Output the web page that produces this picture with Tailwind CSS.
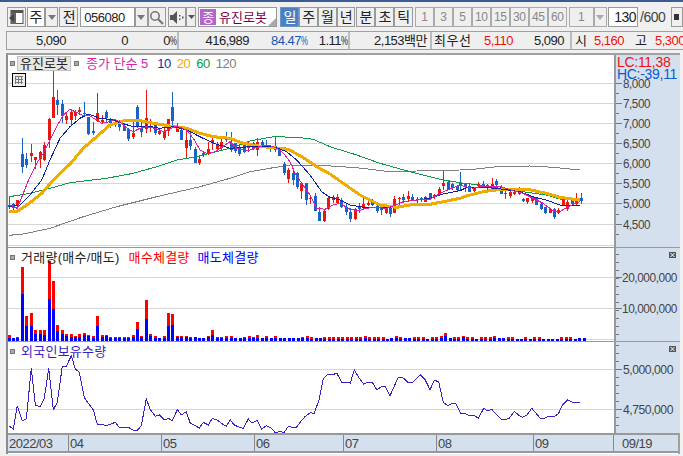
<!DOCTYPE html>
<html lang="ko">
  <head>
    <meta charset="UTF-8" />
    <title>Chart</title>
    <script src="https://cdn.jsdelivr.net/npm/@tailwindcss/browser@4"></script>
  </head>
  <body class="bg-[#f0f0f0] overflow-hidden font-['Liberation_Sans','Noto_Sans_CJK_KR',sans-serif] text-[13px] leading-none text-[#222] tracking-[-0.5px]">
    <div class="w-[683px] h-[456px] overflow-hidden flex flex-col">
      <div class="h-[2px] bg-[#3c5a94]"></div>

      <!-- toolbar -->
      <div class="flex h-[20px] mt-[5px] ml-[7px] text-[14px]">
        <div class="w-[19px] border border-[#999] bg-[#efefef] flex items-center justify-center">
          <svg width="15" height="14" viewBox="0 0 15 14"><rect x="2" y="0.5" width="12" height="13" fill="#fff" stroke="#555"/><rect x="2" y="0" width="12" height="3" fill="#555"/><rect x="2" y="3" width="5" height="11" fill="#666"/><path d="M0 8l5-4v8z" fill="#444"/></svg>
        </div>
        <div class="w-[18px] ml-[1px] border border-[#999] bg-white flex items-center justify-center">주</div>
        <div class="w-[14px] border border-[#999] bg-[#efefef] flex items-center justify-center"><svg width="8" height="5"><path d="M0 0h8l-4 5z" fill="#777"/></svg></div>
        <div class="w-[19px] ml-[1px] border border-[#999] bg-[#efefef] flex items-center justify-center">전</div>
        <div class="w-[55px] ml-[2px] border border-[#999] bg-white flex items-center pl-[3px] text-[13px]">056080</div>
        <div class="w-[13px] border border-[#999] bg-[#efefef] flex items-center justify-center"><svg width="8" height="5"><path d="M0 0h8l-4 5z" fill="#777"/></svg></div>
        <div class="w-[19px] border border-[#999] bg-[#efefef] flex items-center justify-center">
          <svg width="15" height="15" viewBox="0 0 15 15" fill="none" stroke="#777"><circle cx="6" cy="6" r="4.2" stroke-width="1.6"/><path d="M9 9l5 5" stroke-width="2.2"/></svg>
        </div>
        <div class="w-[18px] ml-[2px] border border-[#999] bg-[#efefef] flex items-center justify-center">
          <svg width="14" height="13" viewBox="0 0 14 13" fill="#555"><path d="M0 4h3l4-4v13l-4-4H0z"/><rect x="9" y="4" width="1.5" height="1.5"/><rect x="9" y="7.5" width="1.5" height="1.5"/><rect x="12" y="5.5" width="1.5" height="2"/></svg>
        </div>
        <div class="w-[10px] border border-[#999] bg-[#efefef] flex items-center justify-center"><svg width="7" height="4"><path d="M0 0h7l-3.5 4z" fill="#555"/></svg></div>
        <div class="relative w-[80px] ml-[2px] border border-[#999] bg-white flex items-center pl-[1px]">
          <span class="w-[16px] h-[16px] bg-[#b565c9] text-white flex items-center justify-center text-[13px]">종</span>
          <span class="ml-[3px] text-[#7a0040] text-[13px] tracking-[0px]">유진로봇</span>
          <svg class="absolute right-0 bottom-0" width="8" height="8"><path d="M8 0v8H0z" fill="#aaa"/></svg>
        </div>
        <div class="w-[19px] ml-[3px] border border-[#6d93c7] bg-[#4a7fc0] text-white flex items-center justify-center">일</div>
        <div class="w-[19px] border border-[#999] bg-[#efefef] flex items-center justify-center">주</div>
        <div class="w-[19px] border border-[#999] bg-[#efefef] flex items-center justify-center">월</div>
        <div class="w-[19px] border border-[#999] bg-[#efefef] flex items-center justify-center">년</div>
        <div class="w-[19px] ml-[1px] border border-[#999] bg-[#efefef] flex items-center justify-center">분</div>
        <div class="w-[19px] border border-[#999] bg-[#efefef] flex items-center justify-center">초</div>
        <div class="w-[19px] border border-[#999] bg-[#efefef] flex items-center justify-center">틱</div>
        <div class="flex ml-[2px] text-[12px] text-[#888]">
          <div class="w-[19px] border border-[#aaa] bg-[#efefef] flex items-center justify-center">1</div>
          <div class="w-[19px] border border-[#aaa] bg-[#efefef] flex items-center justify-center">3</div>
          <div class="w-[19px] border border-[#aaa] bg-[#efefef] flex items-center justify-center">5</div>
          <div class="w-[19px] border border-[#aaa] bg-[#efefef] flex items-center justify-center">10</div>
          <div class="w-[19px] border border-[#aaa] bg-[#efefef] flex items-center justify-center">15</div>
          <div class="w-[19px] border border-[#aaa] bg-[#efefef] flex items-center justify-center">30</div>
          <div class="w-[19px] border border-[#aaa] bg-[#efefef] flex items-center justify-center">45</div>
          <div class="w-[19px] border border-[#aaa] bg-[#efefef] flex items-center justify-center">60</div>
        </div>
        <div class="w-[25px] ml-[2px] border border-[#aaa] bg-[#efefef] text-[#888] text-[12px] flex items-center justify-center">1</div>
        <div class="w-[14px] border border-[#aaa] bg-[#efefef] flex items-center justify-center"><svg width="8" height="5"><path d="M0 0h8l-4 5z" fill="#aaa"/></svg></div>
        <div class="w-[30px] ml-[1px] border border-[#999] bg-white flex items-center justify-end pr-[1px]">130</div>
        <div class="w-[24px] ml-[2px] flex items-center text-[#444]">/600</div>
        <div class="ml-[7px] w-[12px] border border-[#999] bg-[#efefef] flex items-center pl-[2px]"><svg width="5" height="6"><path d="M0 0h5v6H0z" fill="#333"/></svg></div>
      </div>

      <!-- quote strip -->
      <div class="flex h-[19px] mt-[4px] ml-[6px] w-[690px] border border-[#a0a0a0] bg-[#efefef] text-[13px] items-center">
        <div class="flex w-[172px] h-full items-center border-r-2 border-[#bbb] shrink-0">
          <span class="w-[59px] text-right">5,090</span>
          <span class="w-[62px] text-right">0</span>
          <span class="w-[48px] text-right">0<span class="inline-block w-[6px] scale-x-[.6] origin-left text-left">%</span></span>
        </div>
        <div class="flex w-[171px] h-full items-center border-r-2 border-[#bbb] shrink-0">
          <span class="w-[70px] text-right">416,989</span>
          <span class="w-[58px] text-right text-[#1a56b8]">84.47<span class="inline-block w-[6px] scale-x-[.6] origin-left text-left">%</span></span>
          <span class="w-[40px] text-right">1.11<span class="inline-block w-[6px] scale-x-[.6] origin-left text-left">%</span></span>
        </div>
        <div class="w-[82px] h-full flex items-center justify-end pr-[3px] border-r-2 border-[#bbb] shrink-0">2,153백만</div>
        <div class="flex w-[140px] h-full items-center border-r-2 border-[#bbb] shrink-0 pl-[2px]">
          <span class="w-[46px] tracking-[0.5px]">최우선</span>
          <span class="w-[33px] text-right text-[#ee1111]">5,110</span>
          <span class="w-[51px] text-right">5,090</span>
        </div>
        <div class="flex h-full items-center shrink-0 pl-[3px]">
          <span class="w-[17px]">시</span>
          <span class="w-[32px] text-right text-[#ee1111]">5,160</span>
          <span class="w-[11px]"></span>
          <span class="w-[20px]">고</span>
          <span class="w-[30px] text-right text-[#ee1111]">5,300</span>
        </div>
      </div>

      <!-- chart frame -->
      <div class="mt-[3px] ml-[6px] w-[674px] border-2 border-[#a0a0a0] border-l-[#8c8c8c] border-b-0 flex flex-col h-[401px] bg-white">
        <!-- price pane -->
        <div class="flex h-[193px] border-b border-[#999]">
          <div class="relative w-[606px]">
            <svg id="price" class="block" width="606" height="193" viewBox="8 55 606 193" shape-rendering="crispEdges"></svg>
            <div class="absolute left-[2px] top-0 flex items-center h-[16px] text-[13px] whitespace-nowrap">
              <span class="w-[5px] h-[5px] bg-[#a8a8a8] border border-[#777]"></span>
              <span class="ml-[2px] w-[54px] h-[15px] bg-[#e6e6e6] border border-[#c4c4c4] flex items-center justify-center text-[#222] tracking-[0px]">유진로봇</span>
              <span class="ml-[3px] w-[5px] h-[5px] bg-[#a8a8a8] border border-[#777]"></span>
              <span class="ml-[7px] text-[#d81fa8] tracking-[0px]">종가 단순 5</span>
              <span class="ml-[9px] text-[#0a2bb8]">10</span>
              <span class="ml-[6px] text-[#f0a500]">20</span>
              <span class="ml-[6px] text-[#0a9b45]">60</span>
              <span class="ml-[6px] text-[#808080]">120</span>
            </div>
            <svg class="absolute left-[4px] top-[18px]" width="14" height="14" viewBox="0 0 14 14" shape-rendering="crispEdges"><rect x="0.5" y="0.5" width="13" height="13" fill="#eee" stroke="#000"/><path d="M3 3.5h8M3 6.5h8M3 9.5h8M3.5 3v8M6.5 3v8M9.5 3v8" stroke="#777" fill="none"/></svg>
          </div>
          <div class="relative w-[66px] bg-[#d5e0ee] border-l-2 border-[#999]">
            <svg id="priceAxis" class="block" width="64" height="193" viewBox="616 55 64 193"></svg>
            <div class="absolute left-0 top-0 w-[64px] h-[24px] pl-[1px] pt-[1px] bg-[#d5e0ee] text-[14px] tracking-[-0.3px] leading-[12px] whitespace-nowrap">
              <div class="text-[#ee1111]">LC:11,38</div>
              <div class="text-[#0a5bd0]">HC:-39,11</div>
            </div>
          </div>
        </div>
        <!-- volume pane -->
        <div class="flex h-[94px] border-b border-[#999]">
          <div class="relative w-[606px]">
            <svg id="volume" class="block" width="606" height="93" viewBox="8 249 606 93" shape-rendering="crispEdges"></svg>
            <div class="absolute left-[2px] top-[1px] flex items-center h-[16px] text-[13px] tracking-[0.25px] whitespace-nowrap">
              <span class="w-[5px] h-[5px] bg-[#a8a8a8] border border-[#777]"></span>
              <span class="ml-[6px] text-[#222]">거래량(매수/매도)</span>
              <span class="ml-[9px] text-[#f00]">매수체결량</span>
              <span class="ml-[8px] text-[#00f]">매도체결량</span>
            </div>
          </div>
          <div class="w-[66px] bg-[#d5e0ee] border-l-2 border-[#999]">
            <svg id="volumeAxis" class="block" width="64" height="93" viewBox="616 249 64 93"></svg>
          </div>
        </div>
        <!-- foreign holdings pane -->
        <div class="flex h-[93px] border-b-2 border-[#999]">
          <div class="relative w-[606px]">
            <svg id="foreign" class="block" width="606" height="91" viewBox="8 343 606 91" shape-rendering="crispEdges"></svg>
            <div class="absolute left-[2px] top-[1px] flex items-center h-[16px] text-[13px] tracking-[0.25px] whitespace-nowrap">
              <span class="w-[5px] h-[5px] bg-[#a8a8a8] border border-[#777]"></span>
              <span class="ml-[6px] text-[#3b1fc0]">외국인보유수량</span>
            </div>
          </div>
          <div class="w-[66px] bg-[#d5e0ee] border-l-2 border-[#999]">
            <svg id="foreignAxis" class="block" width="64" height="91" viewBox="616 343 64 91"></svg>
          </div>
        </div>
        <!-- date axis -->
        <div class="flex h-[18px] bg-[#d5e0ee] border-b-2 border-[#999] text-[13px] text-[#444] items-center">
          <div class="w-[61px] h-full border-r border-[#888] flex items-center pl-[1px]">2022/03</div>
          <div class="w-[93px] h-full border-r border-[#888] flex items-center pl-[1px]">04</div>
          <div class="w-[93px] h-full border-r border-[#888] flex items-center pl-[1px]">05</div>
          <div class="w-[89px] h-full border-r border-[#888] flex items-center pl-[1px]">06</div>
          <div class="w-[93px] h-full border-r border-[#888] flex items-center pl-[1px]">07</div>
          <div class="w-[97px] h-full border-r border-[#888] flex items-center pl-[1px]">08</div>
          <div class="w-[80px] h-full border-r border-[#888] flex items-center pl-[1px]">09</div>
          <div class="flex-1 h-full flex items-center pl-[8px]">09/19</div>
        </div>
      </div>
    </div>

    <script>
      // candles traced from the chart: [x, wickTop, bodyTop, bodyBottom, wickBottom, up?]
      const RED = "#e8170f", BLUE = "#1763c8";
      const seg1 = [[28,322,345,350,358,0],[40,338,343,355,358,0],[52,330,330,345,360,1],[67,145,192,230,250,0],[79,190,207,225,235,0],[94,162,190,200,215,1],[106,200,202,210,235,1],[121,182,185,205,232,1],[133,155,165,210,212,1],[146,85,87,150,175,1],[160,-60,21,83,85,1],[172,0,30,45,75,0],[187,30,42,78,100,0],[199,65,78,90,100,1],[214,62,67,90,105,1],[226,60,67,78,90,1],[238,50,60,65,75,1],[253,35,70,74,75,0],[265,80,80,132,135,0],[280,95,123,130,135,0],[292,10,70,95,97,1],[306,75,90,95,100,1],[319,60,67,85,95,0],[331,85,90,100,115,0],[346,90,95,105,110,1],[358,90,102,110,122,0],[373,100,108,122,125,0],[385,115,118,147,155,0],[400,97,130,143,147,1],[412,45,50,108,115,0],[424,90,115,128,140,0],[439,0,85,118,130,1],[451,88,108,115,128,1],[466,100,105,128,135,0],[478,115,122,130,135,1],[493,110,122,142,150,1],[505,88,88,125,138,1],[517,5,52,95,110,0],[532,100,110,125,128,1],[544,118,120,150,150,0],[559,120,150,173,208,1],[571,125,150,168,178,0],[586,172,178,220,220,0],[598,195,207,218,225,1],[610,185,190,195,200,0],[625,155,178,192,195,1],[637,140,150,160,180,1],[652,155,162,177,185,1],[664,140,155,172,178,1],[679,125,142,150,155,0]];
      const seg2 = [[2,35,70,90,95,0],[14,70,70,95,100,0],[28,75,82,103,108,0],[41,70,72,95,100,0],[55,65,72,85,95,1],[68,65,68,85,90,0],[82,55,65,88,108,1],[95,60,65,78,85,0],[108,60,75,80,85,0],[120,75,78,88,95,0],[134,50,78,90,95,0],[148,85,90,108,108,0],[161,125,132,158,165,0],[175,145,150,178,190,1],[188,145,160,182,195,0],[200,155,160,202,205,0],[214,185,190,213,235,1],[227,190,190,242,255,0],[241,225,235,238,252,1],[254,220,228,273,275,0],[268,262,276,303,305,0],[281,270,273,303,305,1],[294,230,235,268,270,1],[308,225,232,240,250,1],[320,222,230,247,248,1],[334,235,240,262,265,0],[347,250,260,275,285,0],[361,265,276,297,308,0],[374,265,268,298,300,1],[386,250,258,268,280,0],[400,235,252,262,270,1],[413,238,250,255,258,1],[427,238,242,255,260,0],[440,255,258,272,280,0],[454,260,265,272,285,0],[467,260,267,280,282,1],[479,258,262,283,292,0],[493,228,237,278,278,1],[506,232,235,238,262,1],[520,222,230,240,248,0],[533,212,228,238,245,1],[547,222,230,242,243,0],[560,232,236,240,250,1],[573,230,235,238,245,0],[586,228,230,245,245,1],[600,218,220,235,240,0],[613,222,225,232,238,1],[626,200,208,222,225,1],[640,152,190,200,208,1],[653,182,186,207,210,0],[667,190,192,205,212,0],[680,195,198,210,215,0]];
      const seg3 = [[22,65,97,108,120,0],[37,98,102,108,125,0],[49,100,108,125,128,0],[64,110,112,125,125,1],[76,97,103,110,115,1],[91,94,103,108,115,0],[103,103,105,110,130,1],[116,85,103,118,125,1],[130,88,92,104,118,0],[143,105,112,132,132,0],[157,118,130,133,147,0],[170,120,125,138,143,1],[184,118,125,130,135,1],[197,112,122,132,135,0],[209,145,148,155,158,0],[223,143,145,157,160,1],[236,138,140,152,158,1],[250,140,142,165,165,0],[263,155,162,177,178,0],[277,170,172,190,192,0],[290,175,177,188,190,1],[302,175,178,203,207,0],[316,175,180,190,193,1],[329,148,150,165,170,1],[343,150,155,175,182,1],[356,143,145,162,165,0],[370,128,152,160,163,1],[383,128,145,155,162,0]];

      const pick = (seg, ox, oy) => seg.map(c => ({
        x: Math.round(ox + c[0] / 3), wt: oy + c[1] / 3, bt: oy + c[2] / 3, bb: oy + c[3] / 3, wb: oy + c[4] / 3, up: c[5]
      }));
      const candles = [...pick(seg1, 0, 90), ...pick(seg2, 230, 120), ...pick(seg3, 453, 150)];

      const toPts = (pts, ox, oy) => {
        const out = [];
        for (let i = 0; i < pts.length; i += 2) out.push((ox + pts[i] / 3).toFixed(1) + "," + (oy + pts[i + 1] / 3).toFixed(1));
        return out.join(" ");
      };
      const line = (parts, color, w) => `<polyline points="${parts.join(" ")}" fill="none" stroke="${color}" stroke-width="${w}" shape-rendering="crispEdges"/>`;

      const ma120 = [toPts([28,436,70,432,150,415,250,380,350,350,470,320,600,290,690,265],0,90), toPts([60,155,130,143,180,135,290,137,380,143,480,155,560,153,690,150],230,120), toPts([70,57,130,50,230,48,300,52,380,60],453,150)];
      const ma60 = [toPts([28,320,90,310,150,295,210,278,260,272,320,265,400,250,470,230,530,210,590,200,690,175],0,90), toPts([60,63,130,50,200,52,250,58,300,80,380,105,450,130,540,155,640,180,690,188],230,120), toPts([60,103,140,115,210,125,280,135,320,147,380,150],453,150)];
      const ma20 = [toPts([28,366,50,365,90,338,125,310,165,265,210,222,250,175,290,140,330,105,370,93,410,90,460,100,510,108,560,115,600,130,640,140,690,145],0,90), toPts([40,70,100,80,175,88,215,110,260,140,300,162,340,190,390,225,450,255,500,262,540,255,600,253,640,245,690,235],230,120), toPts([40,138,90,125,150,117,220,117,280,130,320,142,380,150],453,150)];
      const ma10 = [toPts([28,350,60,345,90,315,125,270,150,210,180,145,210,110,240,85,265,72,300,85,340,90,365,100,400,110,440,108,480,115,520,110,560,120,600,140,640,160,690,175],0,90), toPts([60,80,100,80,130,80,170,95,200,120,240,165,275,215,300,232,330,240,360,255,400,262,480,262,520,245,600,235,640,222,690,212],230,120), toPts([40,113,100,112,150,118,200,125,240,140,280,150,320,165,380,168],453,150)];
      const ma5 = [toPts([28,345,52,355,70,310,90,260,110,220,130,190,150,150,170,110,190,75,210,58,225,65,245,75,265,75,290,90,305,100,330,95,345,88,365,100,385,118,400,125,420,115,440,110,465,115,490,125,515,115,530,108,560,120,580,145,600,180,620,190,640,188,660,175,690,155],0,90), toPts([20,85,55,92,80,82,110,75,130,80,150,90,165,105,180,125,195,160,215,190,240,225,260,265,285,268,310,255,330,250,360,268,385,272,410,265,430,262,470,265,490,258,520,245,560,240,600,238,640,215,690,195],230,120), toPts([30,108,60,115,90,108,120,108,150,112,180,122,210,130,240,145,270,160,300,182,320,185,345,170,380,155],453,150)];

      let price = "";
      [83,103,123,143,163,183,203,224,245].forEach(y => price += `<rect x="8" y="${y}" width="606" height="1" fill="#d6d6d6"/>`);
      price += line(ma120, "#808080", 1);
      candles.forEach(c => {
        const col = c.up ? RED : BLUE;
        price += `<rect x="${c.x}" y="${c.wt.toFixed(0)}" width="1" height="${Math.max(1, c.wb - c.wt).toFixed(0)}" fill="${col}"/>`;
        price += `<rect x="${c.x - 1}" y="${c.bt.toFixed(0)}" width="3" height="${Math.max(1, c.bb - c.bt).toFixed(0)}" fill="${col}"/>`;
      });
      price += line(ma60, "#0a9b45", 1) + line(ma20, "#f0ab00", 3) + line(ma10, "#0a22a8", 1) + line(ma5, "#dd1fa8", 1);
      document.getElementById("price").innerHTML = price;

      // volume bars: zoomed tops up to June, then heights in px over the baseline
      const BASE = 342;
      const volA = [[28,273,282],[40,282,282],[52,280,282],[67,70,150],[79,217,245],[94,208,245],[106,258,270],[121,258,270],[133,258,272],[146,52,165],[160,112,195],[172,243,262],[187,258,270],[199,270,275],[214,270,280],[226,276,280],[238,270,278],[253,267,273],[265,273,275],[280,276,282],[292,217,245],[306,273,278],[319,273,276],[331,280,282],[346,280,283],[358,280,282],[373,280,283],[385,278,281],[400,273,280],[412,235,255],[424,276,280],[439,168,225],[451,270,276],[466,276,282],[478,283,283],[493,276,282],[505,208,245],[517,210,243],[532,276,280],[544,276,280],[559,276,280],[571,280,283],[586,280,280],[598,283,283],[610,283,283],[625,276,280],[637,258,273],[652,280,282],[664,280,282],[679,276,282]];
      const volB = [[5,3],[0,3],[0,3],[4,3],[5,3],[4,3],[6,3],[0,3],[5,3],[0,3],[5,3],[0,3],[0,3],[0,3],[0,3],[0,3],[4,3],[5,3],[4,2],[0,3],[0,3],[4,2],[4,2],[4,2],[4,2],[4,2],[4,2],[4,2],[4,2],[4,2],[5,3],[4,2],[4,2],[4,2],[4,2],[0,2],[0,3],[5,3],[4,2],[0,3],[0,3],[4,2],[4,2],[4,2],[0,2],[4,2],[4,2],[5,3],[8,5],[0,3],[4,2],[4,2],[5,4],[4,2],[4,2],[0,2],[4,2],[4,2],[4,2],[5,3],[0,3],[0,3],[4,2],[4,2],[0,2],[0,2],[4,2],[0,2],[4,2],[4,2],[0,2],[0,2],[0,2],[0,2],[4,2],[4,2],[4,2],[0,2],[0,3],[0,3]];
      let volume = "";
      [278,309,340].forEach(y => volume += `<rect x="8" y="${y}" width="606" height="1" fill="#d6d6d6"/>`);
      const bar = (x, top, mid) => {
        let s = "";
        if (top < mid) s += `<rect x="${x - 1}" y="${top}" width="3" height="${mid - top}" fill="#f00"/>`;
        return s + `<rect x="${x - 1}" y="${mid}" width="3" height="${BASE - mid}" fill="#00f"/>`;
      };
      volA.forEach(v => volume += bar(Math.round(v[0] / 3), Math.round(245 + v[1] / 3), Math.round(245 + v[2] / 3)));
      volB.forEach((v, i) => volume += bar(Math.round(225 + (17 + i * 13.4) / 3), BASE - (v[0] || v[1]), BASE - v[1]));
      document.getElementById("volume").innerHTML = volume;

      const foreignA = [28,262,40,270,52,200,67,245,79,240,94,88,106,198,121,203,133,178,146,88,160,212,172,190,187,82,199,82,214,50,226,90,238,100,253,175,265,193,280,212,292,256,306,256,319,260,331,256,346,250,358,265,373,267,385,265,400,274,412,274,424,260,439,180,451,212,466,232,478,228,493,243,505,238,517,245,532,212,544,228,559,218,571,253,586,260,598,267,610,250,625,258,637,238,652,243,664,253,679,262,691,243,703,258,718,265,730,268,745,240,757,252,772,244,785,270,799,260,814,268,826,281,840,277,852,281,865,262,877,265,889,265,904,245,916,232,931,221,943,223,958,180,970,120,985,105,997,108,1010,102,1025,130];
      const foreignB = [0,130,28,132,40,92,55,118,68,135,82,130,94,130,107,152,122,143,133,142,147,170,172,115,187,117,200,130,215,130,238,108,253,123,267,152,280,124,293,128,307,190,320,200,335,193,345,195,358,222,372,223,385,231,400,229,412,238,428,208,440,216,452,211,480,241,495,241,505,238,520,217,535,230,545,235,558,228,572,208,598,238,610,238,622,232,640,232,652,225,665,197,680,183,695,190,717,190];
      document.getElementById("foreign").innerHTML =
        `<rect x="8" y="370" width="606" height="1" fill="#d6d6d6"/><rect x="8" y="410" width="606" height="1" fill="#d6d6d6"/>` +
        line([toPts(foreignA, 0, 340), toPts(foreignB, 341, 340)], "#3b1fc0", 1);

      // axis ticks and labels
      const axis = (id, labels, from, to, step) => {
        let s = "";
        for (let y = from; y < to; y += step) s += `<rect x="616" y="${Math.round(y)}" width="3" height="1" fill="#777"/>`;
        labels.forEach(l => {
          s += `<rect x="616" y="${l[1]}" width="6" height="1" fill="#777"/>`;
          s += `<text x="${l[2]}" y="${l[1] + 5}" textLength="${l[3]}" lengthAdjust="spacingAndGlyphs" font-size="13" fill="#444" font-family="Liberation Sans">${l[0]}</text>`;
        });
        document.getElementById(id).innerHTML = s;
      };
      axis("priceAxis", [["8,000",83,623,27],["7,500",103,623,27],["7,000",123,623,27],["6,500",143,623,27],["6,000",163,623,27],["5,500",183,623,27],["5,000",203,623,27],["4,500",224,623,27]], 93, 248, 20.1);
      axis("volumeAxis", [["20,000,000",278,622,55],["10,000,000",309,622,55]], 255, 342, 8);
      axis("foreignAxis", [["5,000,000",370,623,50],["4,750,000",410,623,50]], 346, 434, 8);

      // close boxes on the lower panes
      const closeBox = (y) => `<rect x="669" y="${y}" width="7" height="6" fill="#555"/><path d="M670.5 ${y + 1}l4 4m0-4l-4 4" stroke="#fff" fill="none"/>`;
      document.getElementById("volumeAxis").innerHTML += closeBox(253);
      document.getElementById("foreignAxis").innerHTML += closeBox(347);
    </script>
  </body>
</html>
